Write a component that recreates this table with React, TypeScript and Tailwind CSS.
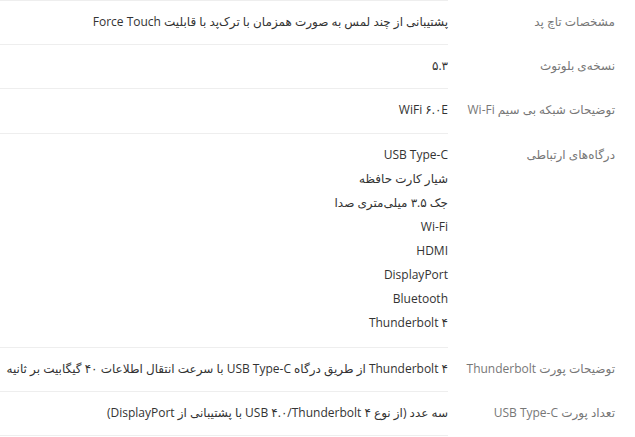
import React from "react";

const rows: { label: string; values: string[] }[] = [
  {
    label: "مشخصات تاچ پد",
    values: ["پشتیبانی از چند لمس به صورت همزمان با ترک\u200cپد با قابلیت Force Touch"],
  },
  { label: "نسخه\u200cی بلوتوث", values: ["۵.۳"] },
  { label: "توضیحات شبکه بی سیم Wi-Fi", values: ["WiFi ۶.۰E"] },
  {
    label: "درگاه\u200cهای ارتباطی",
    values: [
      "USB Type-C",
      "شیار کارت حافظه",
      "جک ۳.۵ میلی\u200cمتری صدا",
      "Wi-Fi",
      "HDMI",
      "DisplayPort",
      "Bluetooth",
      "Thunderbolt ۴",
    ],
  },
  {
    label: "توضیحات پورت Thunderbolt",
    values: ["Thunderbolt ۴ از طریق درگاه USB Type-C با سرعت انتقال اطلاعات ۴۰ گیگابیت بر ثانیه"],
  },
  {
    label: "تعداد پورت USB Type-C",
    values: ["سه عدد (از نوع USB ۴.۰/Thunderbolt ۴ با پشتیبانی از DisplayPort)"],
  },
];

export default function App() {
  return (
    <div
      dir="rtl"
      className="w-[635px] h-[437px] overflow-hidden bg-white text-[12px] leading-[24px]"
      style={{ fontFamily: '"Open Sans", "DejaVu Sans", sans-serif' }}
    >
      <div className="flex">
        <div className="w-[187px] shrink-0" />
        <div className="flex-1 border-t border-[#eeeeee]" />
      </div>
      {rows.map((r, i) => {
        const multi = r.values.length > 1;
        return (
          <div key={i} className="flex items-stretch">
            <div className="w-[187px] shrink-0 pr-[20px] pt-[9px] text-[#777777]">
              {r.label}
            </div>
            <div
              className={`flex-1 border-b border-[#eeeeee] text-[#333333] ${
                multi ? "pt-[9px] pb-[12px]" : i === 2 ? "pt-[9px] pb-[11px]" : "pt-[9px] pb-[10px]"
              }`}
            >
              {r.values.map((v, j) => (
                <div key={j}>{v}</div>
              ))}
            </div>
          </div>
        );
      })}
    </div>
  );
}
